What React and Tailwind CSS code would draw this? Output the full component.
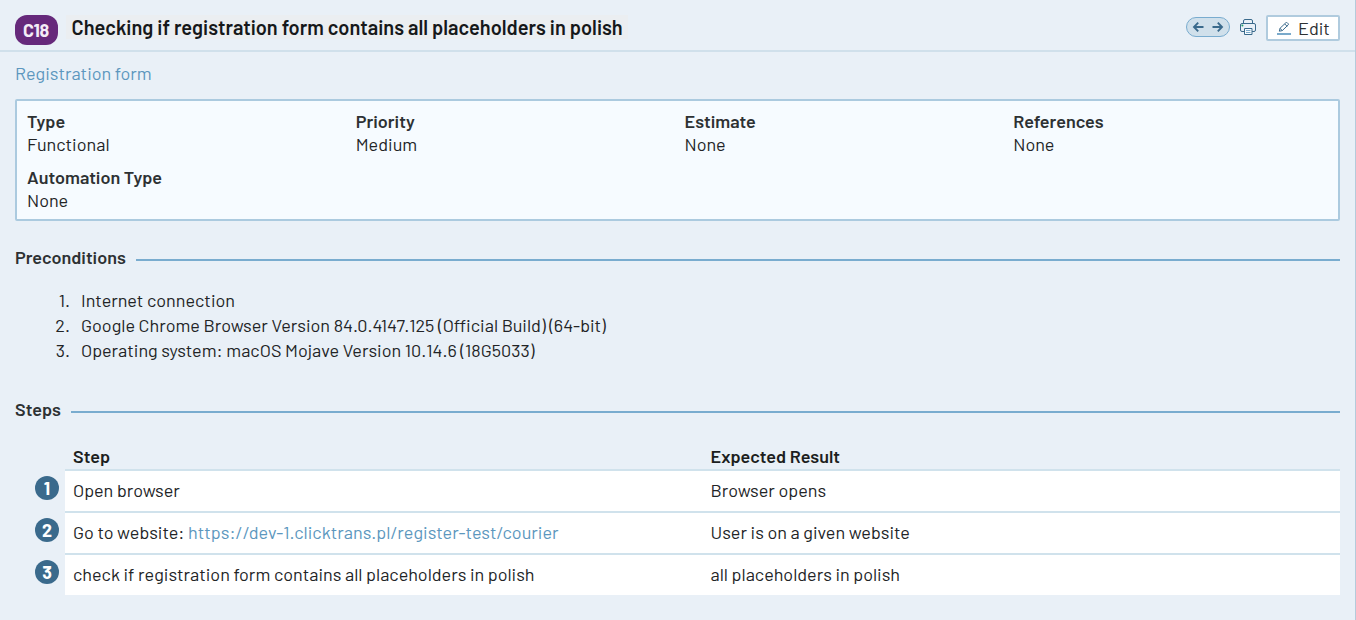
import React from "react";

const details = [
  { label: "Type", value: "Functional" },
  { label: "Priority", value: "Medium" },
  { label: "Estimate", value: "None" },
  { label: "References", value: "None" },
  { label: "Automation Type", value: "None" },
];

const preconditions = [
  "Internet connection",
  "Google Chrome Browser Version 84.0.4147.125 (Official Build) (64-bit)",
  "Operating system: macOS Mojave Version 10.14.6 (18G5033)",
];

const steps = [
  { step: "Open browser", result: "Browser opens" },
  { step: "Go to website: ", link: "https://dev-1.clicktrans.pl/register-test/courier", result: "User is on a given website" },
  { step: "check if registration form contains all placeholders in polish", result: "all placeholders in polish" },
];

function PrinterIcon() {
  return (
    <svg width="18" height="18" viewBox="0 0 18 18" fill="none" stroke="#3a6a8c">
      <path d="M4.5 5.5V3Q4.5 1.5 6 1.5h6Q13.500 1.5 13.5 3v2.500" />
      <path d="M5 13.5H3Q1.5 13.5 1.500 12V7q0-1.5 1.5-1.500h12q1.5 0 1.5 1.5v5q0 1.5-1.5 1.5h-2" />
      <path d="M5.500 10.5h7.500v6H5.500z" fill="#f5fafe" />
      <path d="M7 12.5h4.500M7 14.5h4.500" stroke="#7aaacb" />
      <circle cx="3.400" cy="7.600" r="1" fill="#22a06b" stroke="none" />
    </svg>
  );
}

function PencilIcon() {
  return (
    <svg width="14" height="13" viewBox="0 0 14 13" fill="none">
      <path d="M2.3 9.2l.8-3L8.8.8q.7-.6 1.5 0l.8.8q.7.7 0 1.4L5.3 8.6zM7.7 1.9l2.4 2.4M3 6.3l2.2 2.2" stroke="#3a6a8c" />
      <path d="M0 12h14" stroke="#7aaacb" strokeWidth="2" />
    </svg>
  );
}

function SectionTitle({ children }) {
  return (
    <div className="flex h-6 items-center gap-2.5">
      <h2 className="-mt-0.5 font-semibold text-[#2d3133]">{children}</h2>
      <div className="mt-1 h-0.5 flex-1 bg-[#79accf]" />
    </div>
  );
}

export default function App() {
  return (
    <div className="h-[620px] w-full overflow-hidden whitespace-nowrap border-r border-[#b5cbdb] bg-[#e9f0f7] font-['Barlow','Roboto',sans-serif] text-[18px] leading-6 text-[#222426]">
      <header className="flex h-[52px] items-start border-b-2 border-[#d0e0eb] pl-[15px] pr-[15px] pt-[15px]">
        <div className="flex h-[30px] w-[43px] items-center justify-center rounded-[12px] bg-[#66297b] pr-px text-[18px] font-bold tracking-[-0.4px] text-[#f4ecf6]">C18</div>
        <h1 className="ml-[8px] h-6 w-[562px] bg-[#ebeef1] pl-[5.5px] text-[20px] font-semibold leading-6 text-[#16181a]">
          Checking if registration form contains all placeholders in polish
        </h1>
        <div className="ml-auto flex items-start">
          <div className="mt-[2px] flex h-5 w-11 items-center justify-center rounded-full border border-[#79accf] bg-[#d0e0eb]">
            <svg width="32" height="12" viewBox="0 0 32 12" fill="none" stroke="#3a6a8c" strokeWidth="1.9">
              <path d="M6.200 1.700L2 6l4.200 4.300M2 6h9.500M25.800 1.700L30 6l-4.200 4.300M30 6h-9.500" />
            </svg>
          </div>
          <div className="ml-[9px] mt-[3px]"><PrinterIcon /></div>
          <button className="ml-[9px] flex h-[26px] w-[74px] items-center rounded-[2px] border-2 border-[#b0cbde] bg-white pl-[9px]">
            <PencilIcon />
            <span className="ml-[7px] text-[18px] text-[#2d3133]">Edit</span>
          </button>
        </div>
      </header>

      <main className="px-[15px]">
        <a className="mt-[9px] block h-6 text-[#5c97be]">Registration form</a>

        <section className="mt-[14px] h-[122px] rounded-[2px] border-2 border-[#abcadf] bg-[#f6fbff] pl-[10px] pt-[9px]">
          <dl className="grid w-[1315px] grid-cols-4 gap-y-2.5">
            {details.map((d) => (
              <div key={d.label} className="leading-[23px]">
                <dt className="font-semibold text-[#2d3133]">{d.label}</dt>
                <dd>{d.value}</dd>
              </div>
            ))}
          </dl>
        </section>

        <section className="mt-[25px]">
          <SectionTitle>Preconditions</SectionTitle>
          <ol className="mt-[18px] leading-[25px]">
            {preconditions.map((text, i) => (
              <li key={text} className="flex">
                <span className="mr-[11px] w-[55px] text-right">{i + 1}.</span>
                <span>{text}</span>
              </li>
            ))}
          </ol>
        </section>

        <section className="mt-[35px]">
          <SectionTitle>Steps</SectionTitle>
          <div className="mb-px ml-[50px] mt-[22px] grid grid-cols-2 font-semibold leading-6 text-[#1c1e20]">
            <div className="pl-2">Step</div>
            <div className="pl-2">Expected Result</div>
          </div>
          {steps.map((s, i) => (
            <div key={s.step} className="flex">
              <div className="ml-5 mr-1.5 mt-[7px] flex size-6 items-center justify-center rounded-full bg-[#3a6a8c] text-[18px] font-bold text-white">{i + 1}</div>
              <div className="grid h-[42px] flex-1 grid-cols-2 border-t-2 border-[#d0e2ec] bg-white pt-[7px]">
                <div className="pl-2">
                  {s.step}
                  {s.link && <a className="text-[#5c97be]">{s.link}</a>}
                </div>
                <div className="pl-2">{s.result}</div>
              </div>
            </div>
          ))}
        </section>
      </main>
    </div>
  );
}
